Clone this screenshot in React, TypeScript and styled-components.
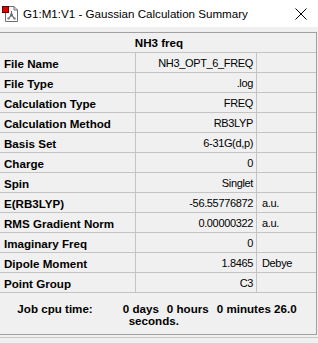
import React from "react";
import styled, { createGlobalStyle } from "styled-components";

const Global = createGlobalStyle`
  html, body { margin: 0; padding: 0; background: #f0f0f0; }
  body { width: 318px; height: 343px; overflow: hidden; font-family: "Liberation Sans", Arial, sans-serif; }
`;

const Window = styled.div`
  width: 318px;
  height: 343px;
  background: #f0f0f0;
  display: flex;
  flex-direction: column;
`;

const TitleBar = styled.div`
  height: 27px;
  background: #ffffff;
  display: flex;
  align-items: center;
  padding-left: 2px;
  box-sizing: border-box;
  flex-shrink: 0;
`;

const TitleText = styled.span`
  margin-left: 4px;
  font-family: "Liberation Sans", Arial, sans-serif;
  font-size: 11.6px;
  color: #000;
  flex: 1;
  white-space: nowrap;
`;

const CloseBox = styled.div`
  width: 46px;
  height: 27px;
  display: flex;
  align-items: center;
  justify-content: center;
  margin-right: -6px;
`;

const Table = styled.div`
  margin-top: 5px;
  width: 317px;
  border-top: 1px solid #a0a0a0;
  border-right: 1px solid #a0a0a0;
  border-bottom: 1px solid #a0a0a0;
  box-sizing: border-box;
`;

const Header = styled.div`
  height: 20px;
  box-sizing: border-box;
  border-bottom: 1px solid #c4c4c4;
  display: flex;
  align-items: center;
  justify-content: center;
  font-weight: bold;
  font-size: 11.6px;
  color: #000;
  padding-left: 2px;
`;

const Row = styled.div`
  display: grid;
  grid-template-columns: 136px 121px 59px;
  height: 20px;
  box-sizing: border-box;
  border-bottom: 1px solid #c4c4c4;
`;

const Cell = styled.div<{ $align?: "left" | "right"; $bold?: boolean; $divider?: boolean }>`
  display: flex;
  align-items: center;
  justify-content: ${(p) => (p.$align === "right" ? "flex-end" : "flex-start")};
  padding: ${(p) => (p.$align === "right" ? "0 3px 0 0" : p.$bold ? "0 0 0 4px" : "0 0 0 5px")};
  border-right: ${(p) => (p.$divider ? "1px solid #c4c4c4" : "none")};
  font-weight: ${(p) => (p.$bold ? "bold" : "normal")};
  font-size: ${(p) => (p.$bold ? "11.6px" : "11px")};
  letter-spacing: ${(p) => (p.$bold ? "0" : "-0.35px")};
  color: #000;
  white-space: nowrap;
  overflow: hidden;
  box-sizing: border-box;
  padding-top: 1px;
`;

const Footer = styled.div`
  height: 41px;
  box-sizing: border-box;
  padding: 10px 2px 0 0;
  text-align: center;
  font-weight: bold;
  font-size: 11.6px;
  line-height: 12px;
  color: #000;
  white-space: nowrap;
`;

const Gap = styled.span`
  display: inline-block;
  width: 30px;
`;

const WideSpace = styled.span`
  display: inline-block;
  width: 8px;
`;

const BottomLine = styled.div`
  margin-top: 2px;
  height: 1px;
  background: #c8c8c8;
`;

const AppIcon = () => (
  <svg width="17" height="18" viewBox="0 0 17 18">
    <path d="M3.5 1.5 H12 L15.5 5 V16.5 H3.5 Z" fill="#fff" stroke="#6e6e6e" />
    <path d="M12 1.5 V5 H15.5" fill="none" stroke="#6e6e6e" />
    <line x1="9.5" y1="6" x2="9.5" y2="10" stroke="#777" strokeWidth="1.2" />
    <line x1="9.5" y1="10" x2="6.5" y2="13.5" stroke="#777" strokeWidth="1.2" />
    <line x1="9.5" y1="10" x2="12.5" y2="13.5" stroke="#777" strokeWidth="1.2" />
    <circle cx="9.5" cy="10" r="1.4" fill="#666" />
    <circle cx="6.5" cy="13.5" r="1.3" fill="#888" />
    <circle cx="12.5" cy="13.5" r="1.3" fill="#888" />
    <rect x="0.5" y="1.5" width="6" height="6" fill="#e00000" stroke="#600" strokeWidth="1" />
  </svg>
);

const CloseIcon = () => (
  <svg width="12" height="12" viewBox="0 0 12 12">
    <path d="M0.5 0.5 L11.5 11.5 M11.5 0.5 L0.5 11.5" stroke="#000" strokeWidth="1" />
  </svg>
);

type Item = { label: string; value: string; unit?: string };

const items: Item[] = [
  { label: "File Name", value: "NH3_OPT_6_FREQ" },
  { label: "File Type", value: ".log" },
  { label: "Calculation Type", value: "FREQ" },
  { label: "Calculation Method", value: "RB3LYP" },
  { label: "Basis Set", value: "6-31G(d,p)" },
  { label: "Charge", value: "0" },
  { label: "Spin", value: "Singlet" },
  { label: "E(RB3LYP)", value: "-56.55776872", unit: "a.u." },
  { label: "RMS Gradient Norm", value: "0.00000322", unit: "a.u." },
  { label: "Imaginary Freq", value: "0" },
  { label: "Dipole Moment", value: "1.8465", unit: "Debye" },
  { label: "Point Group", value: "C3" },
];

export default function App() {
  return (
    <Window>
      <Global />
      <TitleBar>
        <AppIcon />
        <TitleText>G1:M1:V1 - Gaussian Calculation Summary</TitleText>
        <CloseBox>
          <CloseIcon />
        </CloseBox>
      </TitleBar>
      <Table>
        <Header>NH3 freq</Header>
        {items.map((it) => (
          <Row key={it.label}>
            <Cell $bold $divider>{it.label}</Cell>
            <Cell $align="right" $divider>{it.value}</Cell>
            <Cell>{it.unit ?? ""}</Cell>
          </Row>
        ))}
        <Footer>
          Job cpu time:<Gap />0 days<WideSpace />0 hours<WideSpace />0 minutes 26.0
          <br />
          seconds.&nbsp;&nbsp;
        </Footer>
      </Table>
      <BottomLine />
    </Window>
  );
}
